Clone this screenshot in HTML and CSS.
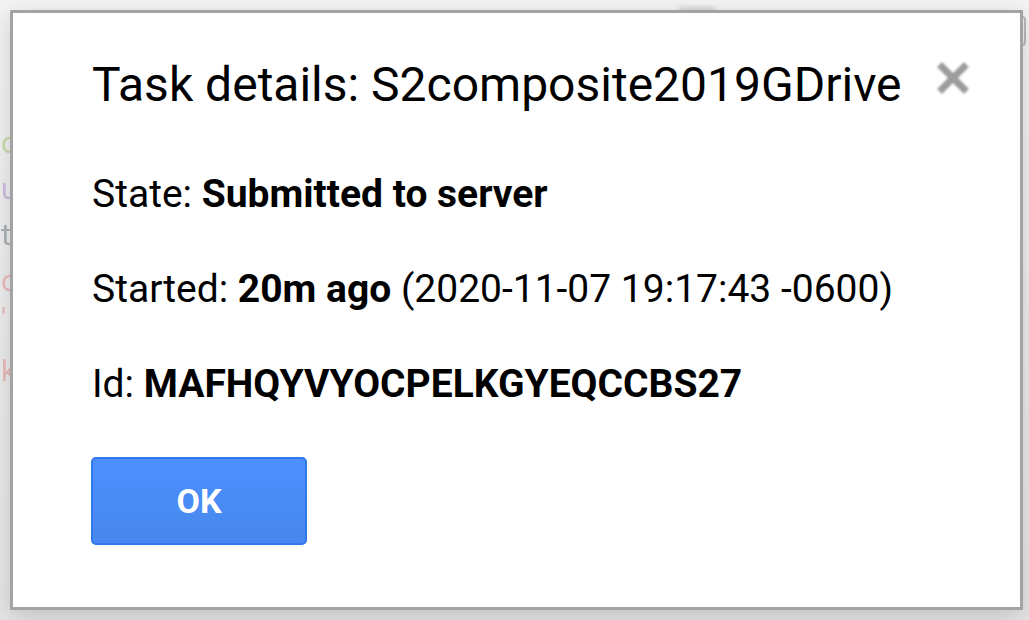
FILE: index.html
```html
<!DOCTYPE html>
<html>
<head>
<meta charset="utf-8">
<link rel="stylesheet" href="styles.css">
</head>
<body>
<div class="backdrop">
  <div class="bg-letters">
    <span class="l1">c</span>
    <span class="l2">u</span>
    <span class="l3">t</span>
    <span class="l4">c</span>
    <span class="l5">'</span>
    <span class="l6">k</span>
  </div>
  <div class="bg-shadow"></div>
  <div class="bg-pill"></div>
  <div class="dialog">
    <div class="header">
      <h1 class="title">Task details: S2composite2019GDrive</h1>
      <button class="close" aria-label="Close">
        <svg width="34" height="34" viewBox="0 0 34 34"><path d="M6 6 L28 28 M28 6 L6 28" stroke="#9c9c9c" stroke-width="7" stroke-linecap="square" fill="none"/></svg>
      </button>
    </div>
    <p class="row">State: <b>Submitted to server</b></p>
    <p class="row">Started: <b>20m ago</b> (2020-11-07 19:17:43 -0600)</p>
    <p class="row">Id: <b>MAFHQYVYOCPELKGYEQCCBS27</b></p>
    <button class="ok">OK</button>
  </div>
</div>
</body>
</html>
```
FILE: styles.css
```css
html, body {
  margin: 0;
  padding: 0;
}
body {
  width: 1029px;
  height: 620px;
  overflow: hidden;
  font-family: Roboto, "Liberation Sans", Arial, sans-serif;
  background: #efefef;
}
.backdrop {
  position: relative;
  width: 1029px;
  height: 620px;
  background: linear-gradient(to bottom, #f3f3f3, #e4e4e4);
  padding: 10px 6px 0 10px;
  box-sizing: border-box;
}
.bg-letters {
  position: absolute;
  left: 1px;
  top: 120px;
  display: flex;
  flex-direction: column;
  font-size: 30px;
  line-height: 46px;
  opacity: 0.4;
}
.l1 { color: #8bc34a; }
.l2 { color: #9575cd; }
.l3 { color: #455a64; }
.l4 { color: #e57373; }
.l5 { color: #e57373; line-height: 30px; }
.l6 { color: #e57373; margin-top: 14px; }
.bg-shadow {
  position: absolute;
  left: 678px;
  top: 7px;
  width: 38px;
  height: 6px;
  border-radius: 3px;
  background: rgba(0,0,0,0.12);
  filter: blur(2px);
}
.bg-pill {
  position: absolute;
  left: 1018px;
  top: 16px;
  width: 8px;
  height: 30px;
  border: 2px solid #b8b8b8;
  border-radius: 5px;
  box-sizing: border-box;
}
.dialog {
  position: relative;
  width: 1013px;
  height: 600px;
  box-sizing: border-box;
  background: #fff;
  border: 3px solid #a3a3a3;
  box-shadow: 0 6px 20px rgba(0,0,0,0.15);
  padding: 42px 0 0 79px;
}
.header {
  display: flex;
  align-items: flex-start;
}
.title {
  margin: 0;
  font-weight: 400;
  font-size: 48px;
  line-height: 60px;
  color: #000;
}
.close {
  margin: 6px 0 0 34px;
  padding: 0;
  border: 0;
  background: none;
  width: 34px;
  height: 34px;
  filter: blur(1px);
}
.row {
  margin: 38px 0 0 0;
  font-size: 39px;
  line-height: 57px;
  color: #000;
}
.header + .row {
  margin-top: 51px;
}
.row b { font-weight: 700; }
.ok {
  margin: 44px 0 0 -1px;
  width: 216px;
  height: 88px;
  box-sizing: border-box;
  border: 2px solid #3079ed;
  border-radius: 5px;
  background: linear-gradient(to bottom, #4d90fe, #4787ed);
  color: #fff;
  font-family: Roboto, "Liberation Sans", Arial, sans-serif;
  font-weight: 700;
  font-size: 34px;
  padding: 0;
}
```
